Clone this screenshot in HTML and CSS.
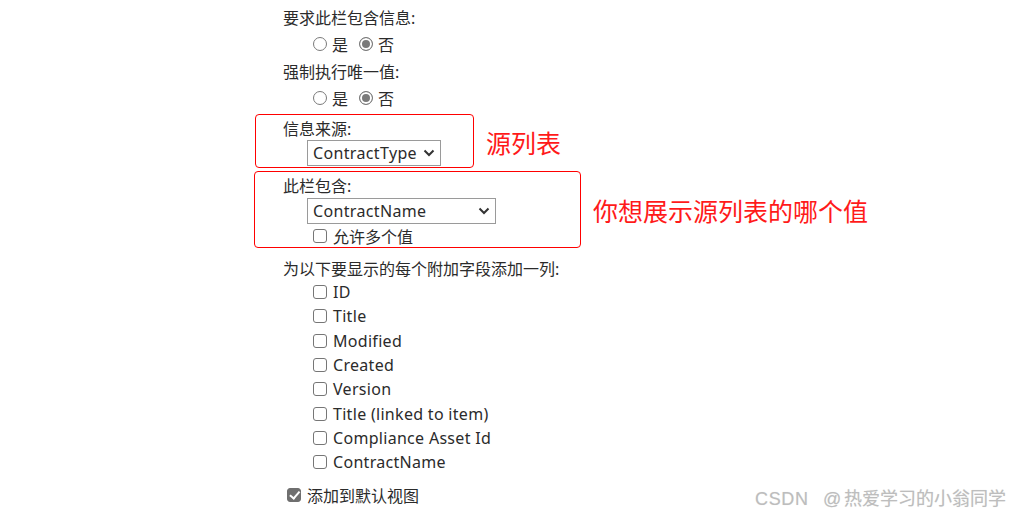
FILE: index.html
```html
<!DOCTYPE html>
<html lang="zh-CN">
<head>
<meta charset="utf-8">
<title>栏设置</title>
<link rel="stylesheet" href="styles.css">
</head>
<body>
<div class="page">
  <div class="row label">要求此栏包含信息:</div>
  <div class="row indent radios">
    <label class="opt"><input type="radio" name="req"><span>是</span></label>
    <label class="opt"><input type="radio" name="req" checked><span>否</span></label>
  </div>
  <div class="row label">强制执行唯一值:</div>
  <div class="row indent radios">
    <label class="opt"><input type="radio" name="uniq"><span>是</span></label>
    <label class="opt"><input type="radio" name="uniq" checked><span>否</span></label>
  </div>

  <div class="annot-row first">
    <div class="box box-source">
      <div class="box-label">信息来源:</div>
      <div class="select-wrap sel-type">
        <select><option>ContractType</option></select>
        <svg class="chev" width="12" height="8" viewBox="0 0 12 8"><path d="M1.5 1.5 L6 6 L10.5 1.5" fill="none" stroke="#333" stroke-width="2"/></svg>
      </div>
    </div>
    <div class="annot">源列表</div>
  </div>

  <div class="annot-row second">
    <div class="box box-column">
      <div class="box-label tall">此栏包含:</div>
      <div class="select-wrap sel-name">
        <select><option>ContractName</option></select>
        <svg class="chev" width="12" height="8" viewBox="0 0 12 8"><path d="M1.5 1.5 L6 6 L10.5 1.5" fill="none" stroke="#333" stroke-width="2"/></svg>
      </div>
      <label class="chk multi"><input type="checkbox"><span>允许多个值</span></label>
    </div>
    <div class="annot">你想展示源列表的哪个值</div>
  </div>

  <div class="row label list-label">为以下要显示的每个附加字段添加一列:</div>
  <div class="checks">
    <label class="chk item"><input type="checkbox"><span class="latin">ID</span></label>
    <label class="chk item"><input type="checkbox"><span class="latin">Title</span></label>
    <label class="chk item"><input type="checkbox"><span class="latin">Modified</span></label>
    <label class="chk item"><input type="checkbox"><span class="latin">Created</span></label>
    <label class="chk item"><input type="checkbox"><span class="latin">Version</span></label>
    <label class="chk item"><input type="checkbox"><span class="latin">Title (linked to item)</span></label>
    <label class="chk item"><input type="checkbox"><span class="latin">Compliance Asset Id</span></label>
    <label class="chk item"><input type="checkbox"><span class="latin">ContractName</span></label>
  </div>
  <label class="chk default-view"><input type="checkbox" checked><span>添加到默认视图</span></label>
</div>
<div class="watermark"><span class="wm-latin">CSDN @</span>热爱学习的小翁同学</div>
</body>
</html>
```

FILE: styles.css
```css
html, body {
  margin: 0;
  background: #ffffff;
}
body {
  font-family: "Noto Sans", "Noto Sans CJK SC", sans-serif;
  font-size: 16px;
  color: #2b2b2b;
  position: relative;
  width: 1020px;
  height: 519px;
  overflow: hidden;
}
input[type="radio"], input[type="checkbox"] {
  appearance: none;
  -webkit-appearance: none;
  margin: 0;
  box-sizing: border-box;
  background: #ffffff;
  flex: none;
  position: relative;
}
input[type="radio"] {
  width: 14px;
  height: 14px;
  border: 1px solid #7a7a7a;
  border-radius: 50%;
}
input[type="radio"]:checked {
  background: #7a7a7a;
  box-shadow: inset 0 0 0 2px #ffffff;
}
input[type="checkbox"] {
  width: 14px;
  height: 14px;
  border: 1.5px solid #767676;
  border-radius: 3px;
}
input[type="checkbox"]:checked {
  background: #6f6f6f;
  border-color: #6f6f6f;
}
input[type="checkbox"]:checked::after {
  content: "";
  position: absolute;
  left: 3.5px;
  top: 0.5px;
  width: 3.5px;
  height: 7.5px;
  border: solid #ffffff;
  border-width: 0 2px 2px 0;
  transform: rotate(40deg);
}
.page {
  margin-left: 254px;
  padding-top: 3px;
}
.row {
  height: 27px;
  display: flex;
  align-items: center;
  padding-left: 29px;
  white-space: nowrap;
}
.row.indent {
  padding-left: 59px;
}
.radios .opt {
  display: inline-flex;
  align-items: center;
  gap: 5px;
  margin-right: 11px;
}

.annot-row {
  display: flex;
  align-items: center;
  gap: 12px;
}
.annot-row.first {
  margin-top: 3px;
  margin-left: 1px;
}
.annot-row.second {
  margin-top: 3px;
}
.box {
  border: 1px solid #ff0000;
  border-radius: 4px;
  box-sizing: border-box;
}
.box-source {
  width: 219px;
  padding: 0 0 1px 27px;
}
.box-column {
  width: 327px;
  padding: 0 0 0 28px;
}
.box-label {
  height: 25px;
  display: flex;
  align-items: center;
}
.box-label.tall {
  height: 26px;
}
.select-wrap {
  position: relative;
  margin-left: 24px;
  height: 26px;
}
.sel-type { width: 134px; }
.sel-name { width: 189px; }
.select-wrap select {
  appearance: none;
  -webkit-appearance: none;
  width: 100%;
  height: 100%;
  box-sizing: border-box;
  border: 1px solid #9a9a9a;
  border-radius: 0;
  background: #ffffff;
  font-family: "Noto Sans", "Noto Sans CJK SC", sans-serif;
  font-size: 16px;
  letter-spacing: 0.35px;
  color: #2b2b2b;
  padding: 0 0 0 5px;
  margin: 0;
}
.chev {
  position: absolute;
  right: 6px;
  top: 9px;
  pointer-events: none;
}
.annot {
  color: #ff1a1a;
  font-family: "Noto Sans CJK SC", sans-serif;
  font-size: 25px;
  line-height: 1;
  padding-top: 2px;
  white-space: nowrap;
}

.chk {
  display: flex;
  align-items: center;
  gap: 6px;
  white-space: nowrap;
}
.latin {
  letter-spacing: 0.3px;
}
.chk.multi {
  height: 23px;
  padding-left: 30px;
}
.list-label {
  margin-top: 8px;
  height: 24px;
}
.checks {
  padding-left: 59px;
}
.chk.item {
  height: 24.3px;
}
.chk.default-view {
  margin-top: 8.6px;
  height: 24px;
  padding-left: 33px;
  gap: 6px;
}

.watermark {
  position: absolute;
  right: 14px;
  bottom: 9px;
  font-family: "Liberation Sans", "Noto Sans CJK SC", sans-serif;
  font-size: 18px;
  color: #bdbdbd;
  text-shadow: 0 0 1px rgba(0,0,0,0.12);
  white-space: nowrap;
}
.wm-latin {
  word-spacing: 9px;
  letter-spacing: 0.6px;
  margin-right: 2px;
}
```
